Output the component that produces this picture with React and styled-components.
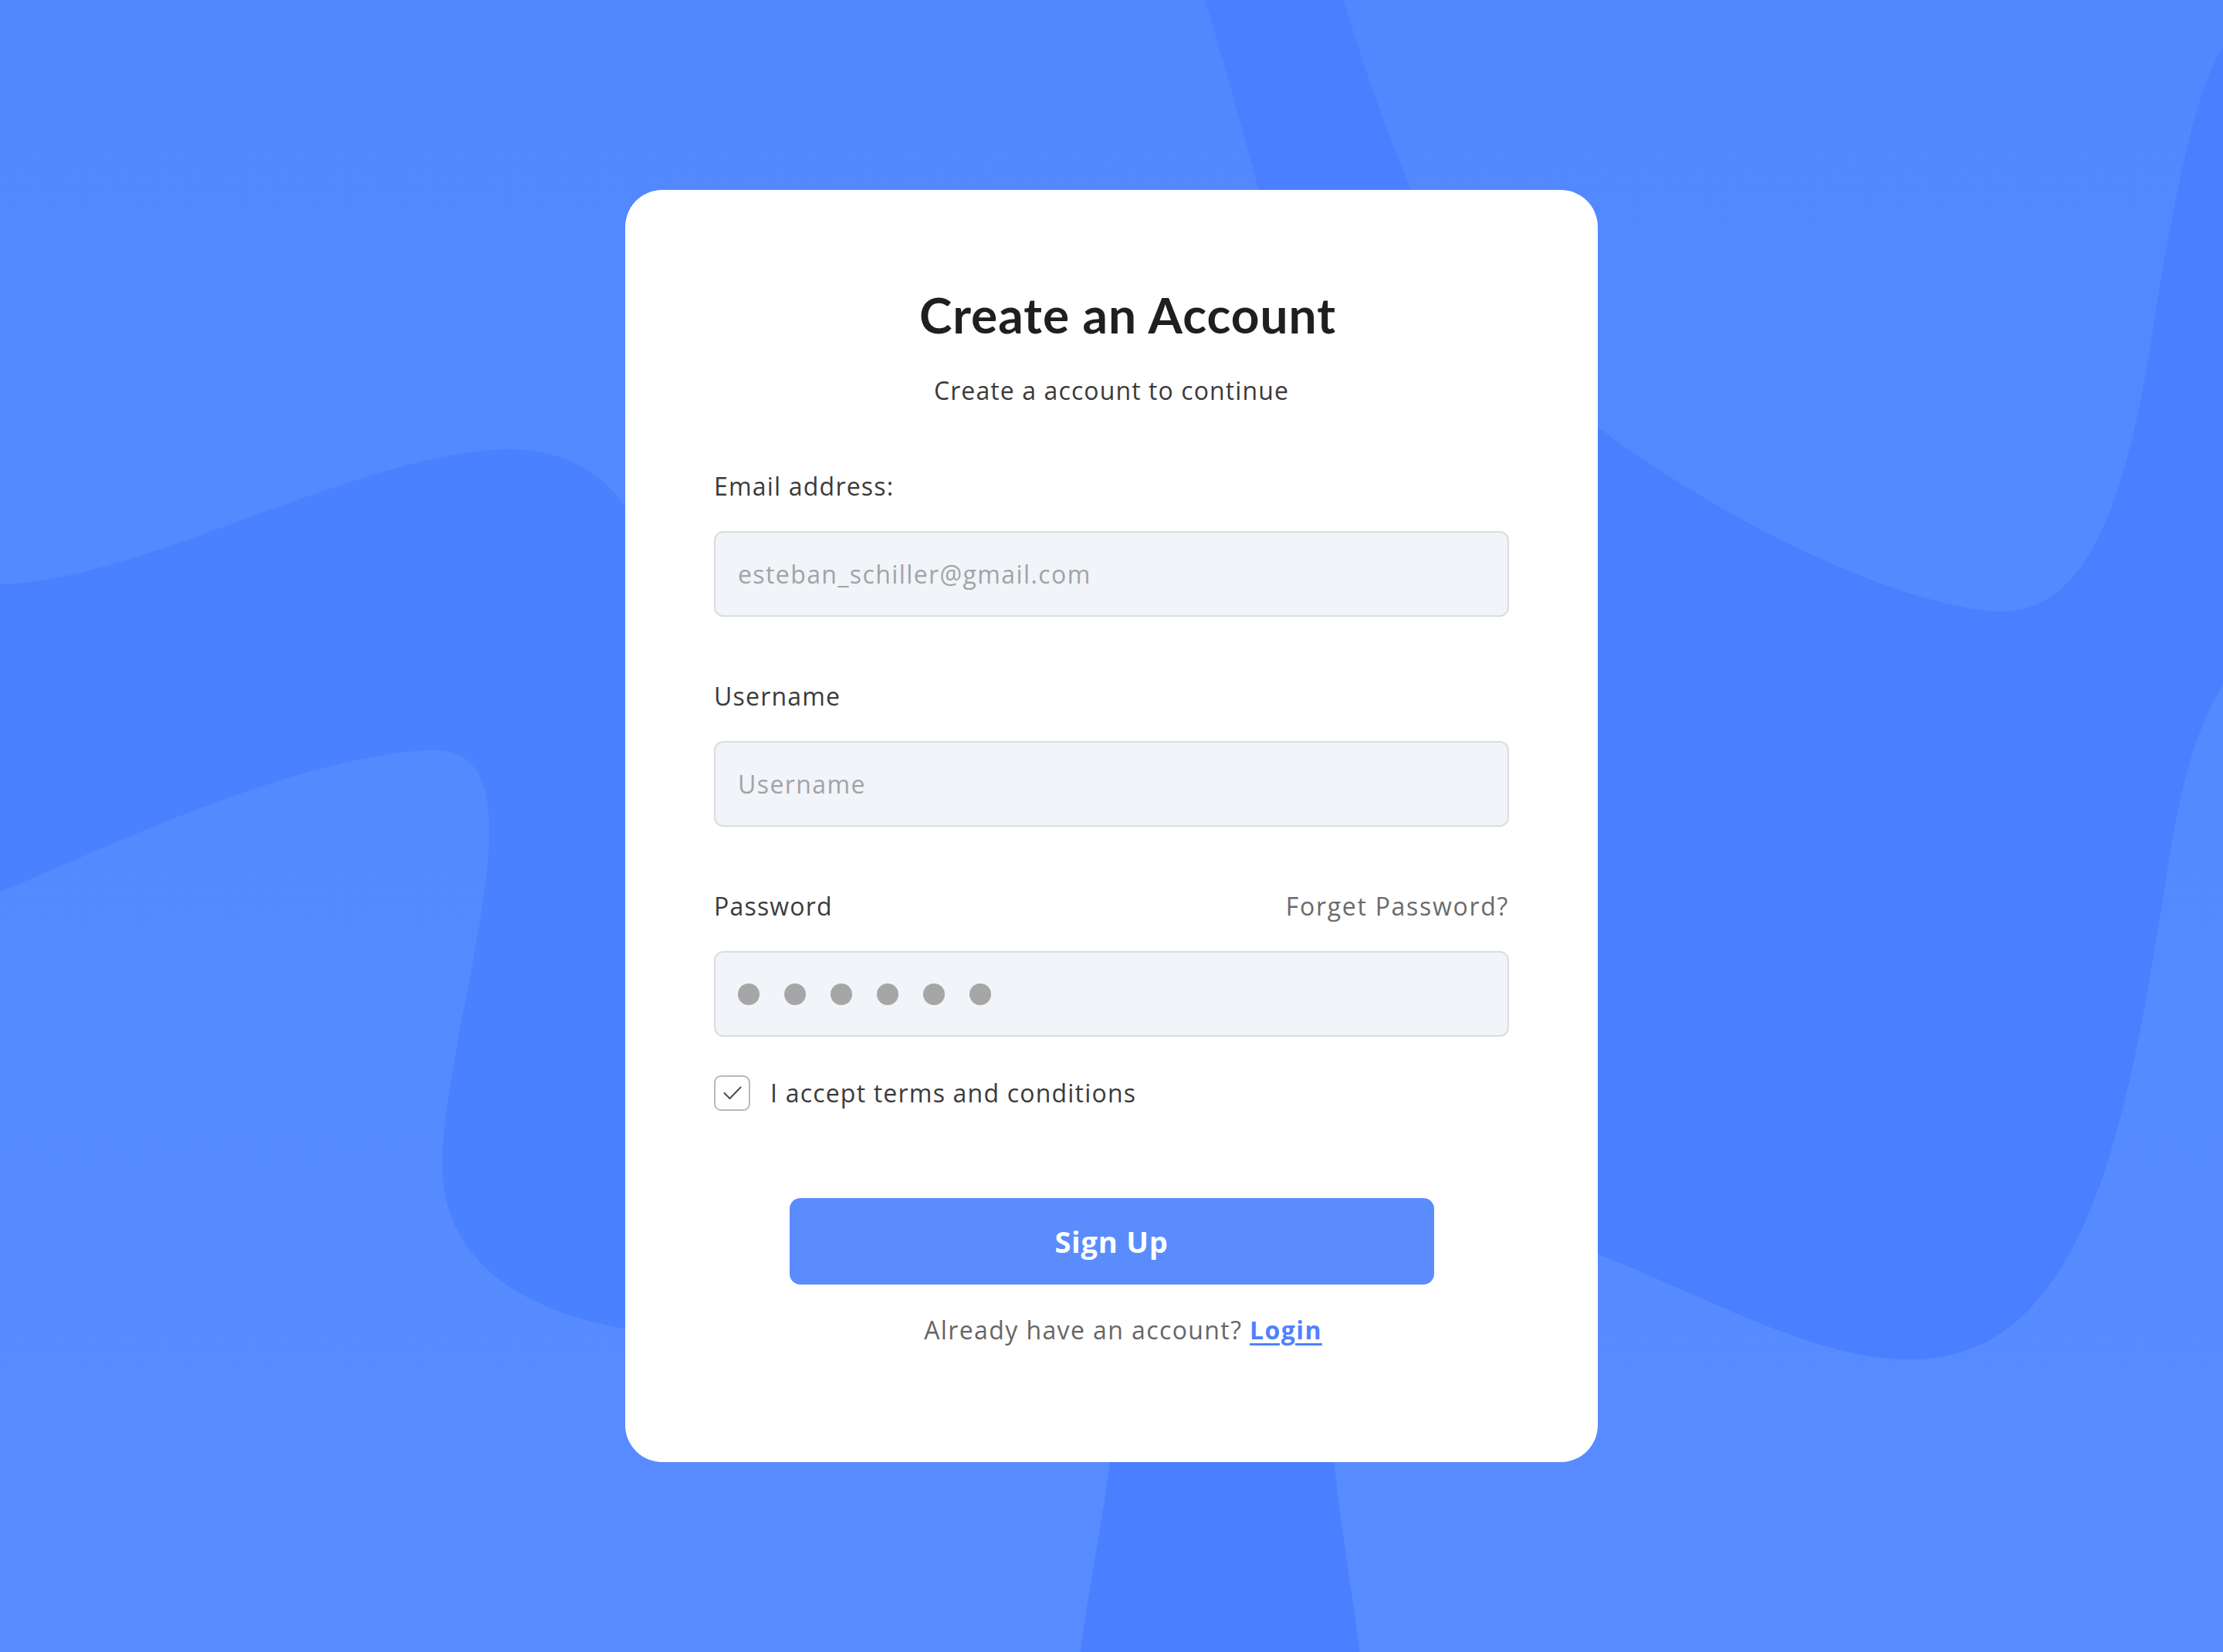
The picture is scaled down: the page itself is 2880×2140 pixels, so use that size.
import React from "react";
import styled, { createGlobalStyle } from "styled-components";

const GlobalStyle = createGlobalStyle`
  html, body {
    margin: 0;
    padding: 0;
  }

  body {
    font-family: "Open Sans", Lato, "Liberation Sans", sans-serif;
    -webkit-font-smoothing: antialiased;
  }

  * {
    box-sizing: border-box;
  }
`;

const Page = styled.main`
  position: relative;
  min-height: 100vh;
  display: flex;
  align-items: center;
  justify-content: center;
  overflow: hidden;
  background: #5489ff;
`;

const Backdrop = styled.svg`
  position: absolute;
  inset: 0;
  width: 100%;
  height: 100%;
`;

const Card = styled.form`
  position: relative;
  z-index: 1;
  width: 1260px;
  padding: 125px 115px 152px;
  background: #ffffff;
  border-radius: 48px;
  display: flex;
  flex-direction: column;
`;

const Title = styled.h1`
  margin: 0;
  padding-left: 42px;
  font-family: Lato, "Open Sans", sans-serif;
  font-size: 64px;
  line-height: 74px;
  font-weight: 700;
  letter-spacing: 1px;
  color: #1f1f1f;
  text-align: center;
`;

const Subtitle = styled.p`
  margin: 42px 0 0;
  font-size: 32px;
  line-height: 38px;
  letter-spacing: 1.1px;
  color: #3a3a3a;
  text-align: center;
`;

const Fields = styled.div`
  margin-top: 86px;
  display: flex;
  flex-direction: column;
  gap: 84px;
`;

const Field = styled.div`
  display: flex;
  flex-direction: column;
  gap: 39px;
`;

const LabelRow = styled.div`
  display: flex;
  justify-content: space-between;
  align-items: baseline;
`;

const Label = styled.label`
  font-size: 32px;
  line-height: 38px;
  letter-spacing: 1.2px;
  color: #3b3b3b;
`;

const ForgetLink = styled.a`
  font-size: 32px;
  line-height: 38px;
  letter-spacing: 1.7px;
  color: #6b6b6b;
  text-decoration: none;
  cursor: pointer;
`;

const Input = styled.input`
  width: 100%;
  height: 111px;
  padding: 0 29px;
  border: 2px solid #dadcdf;
  border-radius: 12px;
  background: #f1f4f9;
  font-family: inherit;
  font-size: 32px;
  letter-spacing: 1.4px;
  color: #3b3b3b;
  outline: none;

  &::placeholder {
    color: #a3a3a3;
  }
`;

const PasswordBox = styled.div`
  width: 100%;
  height: 111px;
  padding: 0 29px;
  border: 2px solid #dadcdf;
  border-radius: 12px;
  background: #f1f4f9;
  display: flex;
  align-items: center;
  gap: 32px;
`;

const Dot = styled.span`
  width: 28px;
  height: 28px;
  border-radius: 50%;
  background: #a6a6a6;
`;

const CheckRow = styled.label`
  margin-top: 50px;
  display: flex;
  align-items: center;
  gap: 26px;
  font-size: 32px;
  line-height: 38px;
  letter-spacing: 1.2px;
  color: #3b3b3b;
  cursor: pointer;
`;

const CheckBox = styled.span`
  width: 47px;
  height: 46px;
  border: 2px solid #b9b9b9;
  border-radius: 9px;
  display: flex;
  align-items: center;
  justify-content: center;
  background: #ffffff;
`;

const SubmitButton = styled.button`
  align-self: center;
  margin-top: 113px;
  width: 835px;
  height: 112px;
  border: none;
  border-radius: 14px;
  background: #5b8cfe;
  color: #ffffff;
  font-family: inherit;
  font-size: 38px;
  font-weight: 700;
  letter-spacing: 0.8px;
  cursor: pointer;
`;

const Footer = styled.p`
  margin: 40px 0 0;
  padding-left: 30px;
  font-size: 32px;
  line-height: 38px;
  letter-spacing: 1.4px;
  color: #666666;
  text-align: center;

  a {
    color: #4f81ff;
    font-weight: 700;
    text-decoration: underline;
    text-underline-offset: 5px;
    text-decoration-thickness: 3px;
  }
`;

const Background = () => (
  <Backdrop viewBox="0 0 1568 1165" preserveAspectRatio="none">
    <defs>
      <linearGradient id="bg" x1="0" y1="0" x2="0" y2="1">
        <stop offset="0" stopColor="#5288ff" />
        <stop offset="1" stopColor="#588cff" />
      </linearGradient>
    </defs>
    <rect width="1568" height="1165" fill="url(#bg)" />
    <path
      d="M850,0 L948,0 C962,50 982,100 995,134 L1000,500 L941,1031 C946,1080 955,1130 959,1165 L762,1165 C768,1120 778,1070 783,1031 L800,500 L888,134 C876,90 862,40 850,0 Z"
      fill="#4a80ff"
    />
    <path
      d="M0,412 C100,410 250,320 356,317 C400,316 425,335 441,357 L460,357 L460,940 L441,937 C370,925 312,890 312,822 C312,760 345,650 345,586 C345,550 335,527 302,529 C200,535 60,605 0,629 Z"
      fill="#4a81ff"
    />
    <path
      d="M1110,288 C1200,360 1330,425 1406,431 C1470,436 1500,360 1520,223 C1535,130 1550,60 1568,33 L1568,483 C1545,520 1535,570 1526,632 C1505,760 1480,930 1378,955 C1300,975 1200,910 1110,878 Z"
      fill="#4a80ff"
    />
  </Backdrop>
);

const App = () => {
  return (
    <>
      <GlobalStyle />
      <Page>
        <Background />
        <Card onSubmit={(e) => e.preventDefault()}>
          <Title>Create an Account</Title>
          <Subtitle>Create a account to continue</Subtitle>

          <Fields>
            <Field>
              <Label htmlFor="email">Email address:</Label>
              <Input
                id="email"
                type="email"
                placeholder="esteban_schiller@gmail.com"
              />
            </Field>

            <Field>
              <Label htmlFor="username">Username</Label>
              <Input id="username" type="text" placeholder="Username" />
            </Field>

            <Field>
              <LabelRow>
                <Label>Password</Label>
                <ForgetLink>Forget Password?</ForgetLink>
              </LabelRow>
              <PasswordBox>
                {[0, 1, 2, 3, 4, 5].map((i) => (
                  <Dot key={i} />
                ))}
              </PasswordBox>
            </Field>
          </Fields>

          <CheckRow>
            <CheckBox>
              <svg width="24" height="18" viewBox="0 0 24 18" fill="none">
                <polyline
                  points="1.5,9 8.5,16 22.5,1.5"
                  stroke="#4d4d4d"
                  strokeWidth="2"
                  strokeLinecap="round"
                  strokeLinejoin="round"
                />
              </svg>
            </CheckBox>
            I accept terms and conditions
          </CheckRow>

          <SubmitButton type="submit">Sign Up</SubmitButton>

          <Footer>
            Already have an account? <a href="#login">Login</a>
          </Footer>
        </Card>
      </Page>
    </>
  );
};

export default App;
